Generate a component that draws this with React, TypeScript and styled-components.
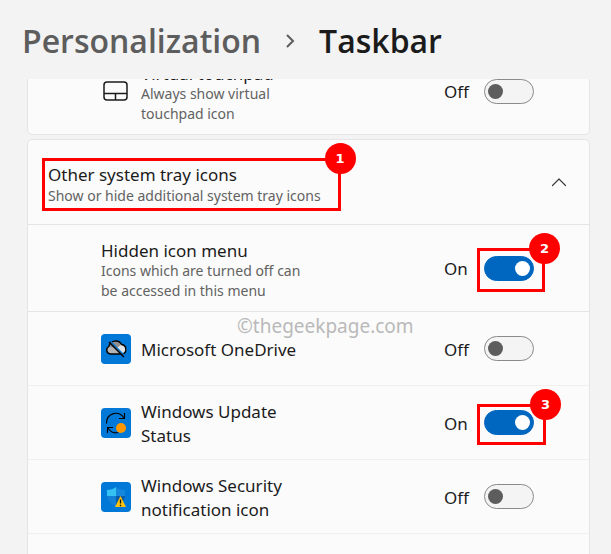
import React from "react";
import styled, { createGlobalStyle } from "styled-components";

const Global = createGlobalStyle`
  *, *::before, *::after { box-sizing: border-box; }
  body { margin: 0; background: #f3f3f3; color: #1b1b1b; font-family: "Noto Sans", "Open Sans", sans-serif; }
`;

const Page = styled.main`
  position: relative;
  height: 100vh;
  display: flex;
  flex-direction: column;
  overflow: hidden;
`;

const Breadcrumb = styled.nav`
  display: flex;
  align-items: center;
  gap: 21px;
  height: 79px;
  flex: none;
  padding: 2px 22px 0;
  font-family: "Open Sans", sans-serif;
  font-size: 32px;
  font-weight: 600;
  line-height: 40px;
`;

const Crumb = styled.a`
  color: #5d5d5d;
  text-decoration: none;
`;

const Current = styled.h1`
  margin: 0;
  font: inherit;
`;

const ScrollArea = styled.div`
  flex: 1;
  min-height: 0;
  overflow: hidden;
  padding: 0 21px 0 27px;
`;

const Card = styled.section<{ $scrolled?: boolean }>`
  background: #fbfbfb;
  border: 1px solid #e5e5e5;
  border-radius: 5px;
  margin: ${(p) => (p.$scrolled ? "-32px" : "0")} 0 4px;
`;

const CardHeader = styled.header`
  display: flex;
  align-items: center;
  justify-content: space-between;
  height: 85px;
  padding: 0 15px 0 20px;
  border-bottom: 1px solid #e5e5e5;
`;

const HeaderText = styled.div`
  position: relative;
  margin-top: 6px;
`;

const ExpandButton = styled.button`
  display: flex;
  align-items: center;
  justify-content: center;
  width: 30px;
  height: 30px;
  padding: 0;
  border: 0;
  background: none;
  color: #3d3d3d;
`;

const Row = styled.div<{ $tall?: boolean; $strong?: boolean }>`
  display: flex;
  align-items: center;
  justify-content: space-between;
  min-height: ${(p) => (p.$tall ? "87px" : "74px")};
  padding: 0 55px 0 73px;
  border-bottom: 1px solid ${(p) => (p.$strong ? "#e5e5e5" : "#f0f0f0")};

  &:last-child {
    min-height: ${(p) => (p.$tall ? "86px" : "73px")};
    border-bottom: 0;
  }
`;

const Lead = styled.div`
  display: flex;
  align-items: center;
  gap: 10px;
  width: 216px;

  svg { flex: none; }
`;

const Label = styled.div<{ $noted: boolean }>`
  padding-top: ${(p) => (p.$noted ? "6px" : "2px")};
`;

const Title = styled.label<{ $noted: boolean }>`
  display: block;
  font-size: 17px;
  line-height: ${(p) => (p.$noted ? "20px" : "24px")};
`;

const SectionTitle = styled.h2`
  margin: 0;
  font-size: 17px;
  font-weight: 400;
  line-height: 22px;
`;

const Note = styled.p`
  margin: 0;
  font-size: 14px;
  line-height: 20px;
  color: #626262;
`;

const Control = styled.div`
  display: flex;
  align-items: center;
`;

const State = styled.span`
  width: 40px;
  padding-top: 2px;
  font-size: 17px;
  line-height: 24px;
`;

const ToggleSlot = styled.div`
  position: relative;
  display: flex;
`;

const Toggle = styled.input`
  appearance: none;
  display: flex;
  align-items: center;
  width: 50px;
  height: 25px;
  margin: 0;
  padding: 0 3px;
  border: 1px solid #8a8a8a;
  border-radius: 13px;
  background: #f4f4f4;

  &::before {
    content: "";
    width: 15px;
    height: 15px;
    border-radius: 50%;
    background: #5d5d5d;
  }

  &:checked {
    justify-content: flex-end;
    background: #0067c0;
    border-color: #0067c0;
  }

  &:checked::before { background: #fff; }
`;

const Callout = styled.div<{ $inset: string }>`
  position: absolute;
  inset: ${(p) => p.$inset};
  border: 3px solid #fe0000;
  pointer-events: none;
`;

const Badge = styled.span`
  position: absolute;
  top: -18px;
  right: -18px;
  width: 31px;
  height: 31px;
  border-radius: 50%;
  background: #fe0000;
  color: #fff;
  font: 700 13px/31px "DejaVu Sans", sans-serif;
  text-align: center;
`;

const Watermark = styled.div`
  position: absolute;
  top: 314px;
  left: 237px;
  font-size: 19px;
  line-height: 24px;
  color: #b9b9b9;
  pointer-events: none;
`;

const CrumbChevron = () => (
  <svg width="16" height="18" viewBox="0 0 16 18" fill="none" stroke="#5d5d5d" strokeWidth="2">
    <path d="M5 3l6 6-6 6" />
  </svg>
);

const ChevronUp = () => (
  <svg width="16" height="10" viewBox="0 0 16 10" fill="none" stroke="currentColor" strokeWidth="1.2" strokeLinecap="round" strokeLinejoin="round">
    <path d="M1.500 8.500L8 2l6.500 6.500" />
  </svg>
);

const TouchpadIcon = () => (
  <svg width="30" height="24" viewBox="0 0 30 24" fill="none" stroke="#1b1b1b" strokeWidth="1.5">
    <rect x="3" y="3" width="23" height="18" rx="3" />
    <path d="M3 14.500H26M14.500 14.500V21" />
  </svg>
);

const OneDriveIcon = () => (
  <svg width="30" height="30" viewBox="0 0 30 30">
    <rect width="30" height="30" rx="4" fill="#0078d7" />
    <path d="M9.500 20a4 4 0 0 1-1.700-7.500 7 7 0 0 1 12.900-2A4.900 4.900 0 0 1 21.500 20z" fill="#b5b5b5" />
    <path d="M8 12.500a7 7 0 0 1 12.700-2l-5 4z" fill="#8f8f8f" />
    <path d="M15 14.500l5.700-4A5 5 0 0 1 22.500 20z" fill="#e4e4e4" />
    <path d="M9.500 20a4 4 0 0 1-1.700-7.500 7 7 0 0 1 12.900-2A4.900 4.900 0 0 1 21.500 20z" fill="none" stroke="#000" strokeWidth="1.4" />
    <path d="M10 8l13.500 13.500" stroke="#0078d7" strokeWidth="1.5" />
    <path d="M8 8l15 15" stroke="#000" strokeWidth="1.500" />
  </svg>
);

const UpdateIcon = () => (
  <svg width="30" height="30" viewBox="0 0 30 30">
    <rect width="30" height="30" rx="4" fill="#0078d7" />
    <path d="M5.500 15.500C5.500 4.500 18 2 23 10M23.500 5v5.500H18M17 24.500C13 25.500 9 23.500 7 20M6.500 25v-5.500H12" fill="none" stroke="#000" strokeWidth="1.1" />
    <circle cx="20" cy="20" r="5" fill="#ff9800" />
  </svg>
);

const SecurityIcon = () => (
  <svg width="30" height="30" viewBox="0 0 30 30">
    <rect width="30" height="30" rx="4" fill="#0078d7" />
    <path d="M6 8c4 0 6.500-1 9-3v9H6z" fill="#35c1f1" />
    <path d="M15 5c2.500 2 5 3 9 3v6h-9z" fill="#1487dc" />
    <path d="M6 14h9v10C9.500 22 6.500 18.500 6 14z" fill="#1180d6" />
    <path d="M15 14h9c-.5 4.500-3.500 8-9 10z" fill="#0a5ba5" />
    <path d="M19.500 14l5.500 11H14z" fill="#ffc20e" />
    <path d="M19.500 17.500v4M19.500 22.700v1.500" stroke="#111" strokeWidth="1.300" />
  </svg>
);

type SettingProps = {
  id: string;
  title: string;
  note?: string;
  icon?: React.ReactNode;
  on?: boolean;
  strong?: boolean;
  children?: React.ReactNode;
};

const Setting = ({ id, title, note, icon, on = false, strong, children }: SettingProps) => (
  <Row $tall={!!note} $strong={strong}>
    <Lead>
      {icon}
      <Label $noted={!!note}>
        <Title htmlFor={id} $noted={!!note}>{title}</Title>
        {note && <Note>{note}</Note>}
      </Label>
    </Lead>
    <Control>
      <State>{on ? "On" : "Off"}</State>
      <ToggleSlot>
        <Toggle id={id} type="checkbox" role="switch" defaultChecked={on} />
        {children}
      </ToggleSlot>
    </Control>
  </Row>
);

export default function App() {
  return (
    <>
      <Global />
      <Page>
        <Breadcrumb aria-label="Breadcrumb">
          <Crumb href="#personalization">Personalization</Crumb>
          <CrumbChevron />
          <Current>Taskbar</Current>
        </Breadcrumb>
        <ScrollArea>
          <Card $scrolled>
            <Setting id="touchpad" title="Virtual touchpad" note="Always show virtual touchpad icon" icon={<TouchpadIcon />} />
          </Card>
          <Card>
            <CardHeader>
              <HeaderText>
                <SectionTitle>Other system tray icons</SectionTitle>
                <Note>Show or hide additional system tray icons</Note>
                <Callout $inset="-6px -20px -5px -6px"><Badge>1</Badge></Callout>
              </HeaderText>
              <ExpandButton aria-label="Collapse" aria-expanded="true"><ChevronUp /></ExpandButton>
            </CardHeader>
            <Setting id="hidden" title="Hidden icon menu" note="Icons which are turned off can be accessed in this menu" on strong>
              <Callout $inset="-8px -11px -11px -7px"><Badge>2</Badge></Callout>
            </Setting>
            <Setting id="onedrive" title="Microsoft OneDrive" icon={<OneDriveIcon />} />
            <Setting id="update" title="Windows Update Status" icon={<UpdateIcon />} on>
              <Callout $inset="-6px -12px -10px -7px"><Badge>3</Badge></Callout>
            </Setting>
            <Setting id="security" title="Windows Security notification icon" icon={<SecurityIcon />} />
            <Row />
          </Card>
        </ScrollArea>
        <Watermark>©thegeekpage.com</Watermark>
      </Page>
    </>
  );
}
